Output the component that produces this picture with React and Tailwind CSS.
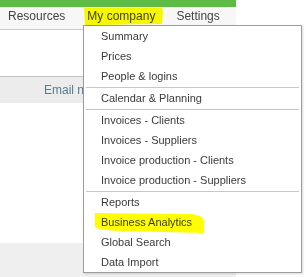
import React from 'react';

const groups = [
    ['Summary', 'Prices', 'People & logins'],
    ['Calendar & Planning'],
    ['Invoices - Clients', 'Invoices - Suppliers', 'Invoice production - Clients', 'Invoice production - Suppliers'],
    ['Reports', 'Business Analytics', 'Global Search', 'Data Import'],
];

export default function App() {
    return (
        <div className="relative w-[306px] h-[277px] overflow-hidden bg-white" style={{ fontFamily: '"Liberation Sans", Arial, sans-serif' }}>
            {/* page */}
            <div className="flex flex-col w-[236px] h-full">
                <div className="h-[7px] bg-[#5dbb46]" />
                <div className="flex h-[23px] gap-[21px] pl-[8px] bg-[#f7f7f7] border-b border-[#cdcdcd] text-[12px] leading-[18px] text-[#444]">
                    <span>Resources</span>
                    <span className="ml-[1px]">My company</span>
                    <span>Settings</span>
                </div>
                <div className="h-[46px]" />
                <div className="h-[27px] border-t border-[#c4c4c4] bg-[#ececec] pl-[44px] text-[12px] leading-[26px] text-[#4f7f96] whitespace-nowrap">
                    Email name
                </div>
                <div className="h-[140px]" />
                <div className="flex-1 bg-[#efefef]" />
            </div>

            {/* dropdown */}
            <div className="absolute left-[83px] top-[25px] w-[219px] h-[248px] bg-white border border-[#9c9c9c] shadow-[1px_1px_2px_rgba(0,0,0,0.15)] text-[11px] leading-[20px] text-[#3a3a3a]">
                {groups.map((items, gi) => (
                    <div key={gi}>
                        {gi > 0 && <div className="mx-[2px] mt-[1px] h-px bg-[#c8c8c8]" />}
                        {items.map((item) => (
                            <div key={item} className="h-[20px] pl-[17px] whitespace-nowrap">{item}</div>
                        ))}
                    </div>
                ))}
            </div>

            {/* highlighter marks */}
            <svg className="absolute left-0 top-0 mix-blend-multiply pointer-events-none" width="306" height="277">
                <path d="M84,8 L162,8 Q163,9 163,12 L162,24 Q130,24 100,25 Q88,27 85,25 Z" fill="#ffff00" />
                <path d="M95,213 L190,214 Q204,215 204,222 L204,233 L122,231 Q98,230 95,227 Z" fill="#ffff00" />
            </svg>
        </div>
    );
}
